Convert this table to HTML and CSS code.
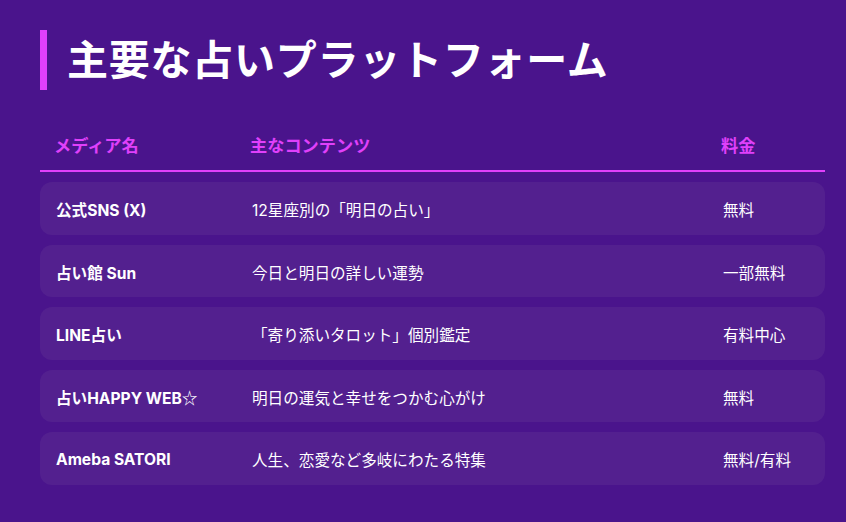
FILE: index.html
```html
<!DOCTYPE html>
<html lang="ja">
<head>
<meta charset="utf-8">
<link rel="stylesheet" href="styles.css">
</head>
<body>
<div class="page">
  <h1 class="title">主要な占いプラットフォーム</h1>
  <div class="table">
    <div class="head">
      <div>メディア名</div>
      <div>主なコンテンツ</div>
      <div>料金</div>
    </div>
    <div class="row"><div class="name">公式SNS (X)</div><div>12星座別の「明日の占い」</div><div>無料</div></div>
    <div class="row"><div class="name">占い館 Sun</div><div>今日と明日の詳しい運勢</div><div>一部無料</div></div>
    <div class="row"><div class="name">LINE占い</div><div>「寄り添いタロット」個別鑑定</div><div>有料中心</div></div>
    <div class="row"><div class="name">占いHAPPY WEB<span class="star">☆</span></div><div>明日の運気と幸せをつかむ心がけ</div><div>無料</div></div>
    <div class="row"><div class="name">Ameba SATORI</div><div>人生、恋愛など多岐にわたる特集</div><div>無料/有料</div></div>
  </div>
</div>
</body>
</html>
```
FILE: styles.css
```css
html, body {
  margin: 0;
  padding: 0;
  background: #4a148c;
}
body {
  font-family: Inter, "Noto Sans CJK JP", sans-serif;
  color: #ffffff;
}
.page {
  padding: 30px 21px 0 40px;
}
.title {
  margin: 0;
  border-left: 7px solid #e040fb;
  padding-left: 20px;
  height: 60px;
  line-height: 60px;
  font-size: 41px;
  font-weight: 700;
  letter-spacing: 0.75px;
}
.table {
  margin-top: 35px;
  display: flex;
  flex-direction: column;
  gap: 10px;
}
.head, .row {
  display: grid;
  grid-template-columns: 196px 1fr 118px;
}
.head {
  box-sizing: border-box;
  border-bottom: 2px solid #e040fb;
  color: #e040fb;
  font-size: 17.2px;
  font-weight: 600;
  height: 47px;
  padding-bottom: 7px;
  align-items: center;
}
.head > div { padding: 0 14px; }
.row {
  box-sizing: border-box;
  background: #53208f;
  border-radius: 12px;
  height: 52.5px;
  padding-top: 2px;
  align-items: center;
  font-size: 15.6px;
}
.row > div { padding: 0 16px; }
.row .name { font-weight: 700; }
.star { font-family: "Noto Sans CJK JP", sans-serif; font-weight: 400; }
```
